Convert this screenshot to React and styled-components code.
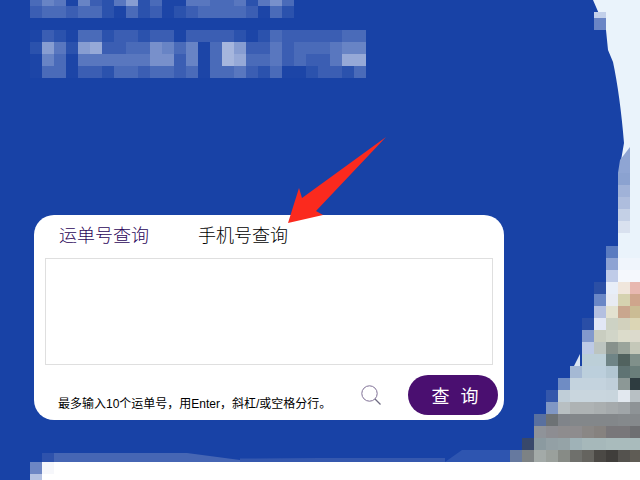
import styled, { createGlobalStyle } from "styled-components";

const GlobalStyle = createGlobalStyle`
  html, body {
    margin: 0;
    padding: 0;
    background: #1842a6;
  }
`;

const Stage = styled.div`
  position: relative;
  box-sizing: border-box;
  width: 640px;
  height: 480px;
  padding: 215px 0 0 34px;
  overflow: hidden;
  background: #1842a6;
  font-family: "Liberation Sans", "Noto Sans CJK SC", sans-serif;
`;

const Backdrop = styled.svg`
  position: absolute;
  inset: 0;
`;

const ArrowMark = styled.svg`
  position: absolute;
  inset: 0;
  z-index: 2;
  pointer-events: none;
`;

const Card = styled.section`
  position: relative;
  z-index: 1;
  box-sizing: border-box;
  width: 470px;
  height: 205px;
  padding: 0 11px;
  background: #fff;
  border-radius: 20px;
  display: flex;
  flex-direction: column;
`;

const Tabs = styled.div`
  display: flex;
  gap: 49px;
  height: 43px;
  padding: 0 0 2px 14px;
  box-sizing: border-box;
  align-items: center;
`;

const Tab = styled.button`
  border: 0;
  padding: 0;
  background: none;
  font-family: inherit;
  font-size: 18px;
  font-weight: 300;
  line-height: 40px;
  color: ${(p) => (p.$active ? "#2c0659" : "#000")};
`;

const NumberBox = styled.textarea`
  box-sizing: border-box;
  display: block;
  width: 448px;
  height: 107px;
  margin: 0;
  border: 1px solid #dfdfdf;
  background: #fff;
  resize: none;
  outline: none;
`;

const Footer = styled.div`
  display: flex;
  align-items: flex-start;
  padding: 10px 0 0 13px;
  margin-right: -5px;
`;

const Hint = styled.p`
  margin: 21px 0 0;
  width: 304px;
  font-size: 12px;
  line-height: 16px;
  color: #000;
  white-space: nowrap;
`;

const SearchIcon = styled.svg`
  margin: 10px 26px 0 0;
  flex: none;
`;

const QueryButton = styled.button`
  width: 90px;
  height: 40px;
  border: 0;
  padding: 0;
  border-radius: 20px;
  background: #4a0f70;
  color: #fff;
  font-family: inherit;
  font-size: 18px;
  letter-spacing: 3px;
  text-indent: 7px;
`;

// brightness of each mosaic cell, 12px grid starting at x=30
const textRows = [
  { y: 0, h: 6, cells: "3540521471300443341463" },
  { y: 6, h: 12, cells: "2332331031201233332031" },
  { y: 30, h: 12, cells: "0210331221220222210132222233" },
  { y: 42, h: 12, cells: "1741782233653503972242333455" },
  { y: 54, h: 12, cells: "0530444444662503983342322488" },
  { y: 66, h: 12, cells: "0330221332332303342130012213" },
];

// photo mosaic at the right edge: [y, first x, colours...]
const photoRows = [
  [173, 618, "#8ba2d0"],
  [185, 618, "#a0b2d8"],
  [197, 618, "#aebddd"],
  [209, 618, "#c4d0e6"],
  [221, 618, "#d9e1ef"],
  [246, 606, "#5a7bc0"],
  [258, 606, "#8ea3d3", "#f0f5fc", "#f0f5fc"],
  [270, 606, "#bfcbe8", "#f5f8fd", "#f5f8fd"],
  [282, 594, "#2b4fa5", "#e8eef8", "#f0e6dc", "#e8b8b0"],
  [294, 594, "#6a87c6", "#e8ebf2", "#d5d2b0", "#cfa58c"],
  [306, 594, "#b4c0e0", "#e3e2d0", "#c9a68e", "#cbbc94"],
  [318, 582, "#2a4ea6", "#e2e7f5", "#cdd2c4", "#d2d1bd", "#dcd6b5"],
  [330, 582, "#8299cd", "#c9cdc0", "#d1d5c8", "#dcdccb", "#dcdacc"],
  [342, 582, "#bdcae6", "#bcc4c0", "#87918c", "#9aa49b", "#c5c8b9"],
  [354, 582, "#bccfd8", "#bccfd8", "#6f8486", "#51625f", "#80908a"],
  [366, 570, "#a5b9d4", "#bccfdc", "#bccfdc", "#b2c6d2", "#5f7373", "#6a7e7a"],
  [378, 558, "#6f8cc4", "#c4d3de", "#c4d3de", "#c4d3de", "#c0cfda", "#8c9896", "#2e3c40"],
  [390, 546, "#3457ab", "#c0ced8", "#c9d6de", "#c9d6de", "#c9d6de", "#c8d5dd", "#e2e8ef", "#b8c0c4"],
  [402, 546, "#8097c4", "#b8bfc2", "#aeb3b4", "#aeb3b4", "#aaafb0", "#a5aaac", "#a0a5a8", "#8e9396"],
  [414, 534, "#59709f", "#6d7275", "#80848a", "#83878a", "#83878a", "#83878a", "#83878a", "#85898c", "#85898c"],
  [426, 534, "#8f9399", "#8d8d92", "#8e8c8e", "#8e8c8e", "#8a8785", "#86827f", "#79777a", "#79777a", "#6e6f72"],
  [438, 522, "#38486b", "#8b9aa0", "#93a0a5", "#95a3a7", "#9fb2b7", "#a6b8ba", "#a6b8ba", "#a9bbbc", "#a9bbbc", "#a9bbbc"],
  [450, 510, "#66799f", "#7d8284", "#a3aaa8", "#9aa09c", "#878b86", "#6f706c", "#65645f", "#4b4945", "#403e3b", "#54524e", "#5f5c55"],
];

const Scenery = () => (
  <Backdrop width="640" height="480" viewBox="0 0 640 480">
    {textRows.map((row) =>
      [...row.cells].map((d, i) => (
        <rect
          key={`${row.y}-${i}`}
          x={30 + i * 12}
          y={row.y}
          width="12"
          height={row.h}
          fill="#fff"
          opacity={0.02 + d * 0.066}
        />
      ))
    )}
    <path
      d="M593 0L606 30L608 50L613 62Q620 95 624 143L618 178V246H606V480H640V0Z"
      fill="#eaf3fb"
    />
    <rect x="594" y="12" width="12" height="6" fill="#c3d0ea" />
    <rect x="594" y="18" width="12" height="12" fill="#6a85c5" />
    <path d="M630 147V173H618L620 160Z" fill="#8fa5d3" />
    {photoRows.map(([y, x, ...colours]) =>
      colours.map((c, i) => (
        <rect key={`${y}-${i}`} x={x + i * 12} y={y} width="12" height="12" fill={c} />
      ))
    )}
    <path d="M574 366L580 354V366Z" fill="#dbe6f2" />
    <path d="M54 453H187L240 460V462H54Z" fill="#4666b4" />
    <path d="M240 458.5L320 458L445 458V462H240Z" fill="#3558ae" />
    <path d="M445 462L462 450H510V462Z" fill="#2e55b0" />
    <rect x="42" y="453" width="12" height="9" fill="#2e52ac" />
    <rect x="30" y="462" width="610" height="18" fill="#fff" />
    <rect x="30" y="462" width="12" height="12" fill="#6d86c4" />
    <rect x="30" y="474" width="12" height="6" fill="#b5c2e2" />
    <rect x="42" y="462" width="12" height="12" fill="#f6f7fb" />
  </Backdrop>
);

const App = () => {
  return (
    <Stage>
      <GlobalStyle />
      <Scenery />
      <Card>
        <Tabs>
          <Tab $active>运单号查询</Tab>
          <Tab>手机号查询</Tab>
        </Tabs>
        <NumberBox />
        <Footer>
          <Hint>最多输入10个运单号，用Enter，斜杠/或空格分行。</Hint>
          <SearchIcon width="21" height="21" viewBox="0 0 21 21" fill="none">
            <circle cx="8.5" cy="8.5" r="7.7" stroke="#7f7096" strokeWidth="1" />
            <path d="M14 14L19.5 19.5" stroke="#6d6a80" strokeWidth="1.2" />
          </SearchIcon>
          <QueryButton>查 询</QueryButton>
        </Footer>
      </Card>
      <ArrowMark width="640" height="480" viewBox="0 0 640 480">
        <path d="M288 223L299 188L302 198L386 137L316 211L323 215Z" fill="#fb2a1e" />
      </ArrowMark>
    </Stage>
  );
};

export default App;
